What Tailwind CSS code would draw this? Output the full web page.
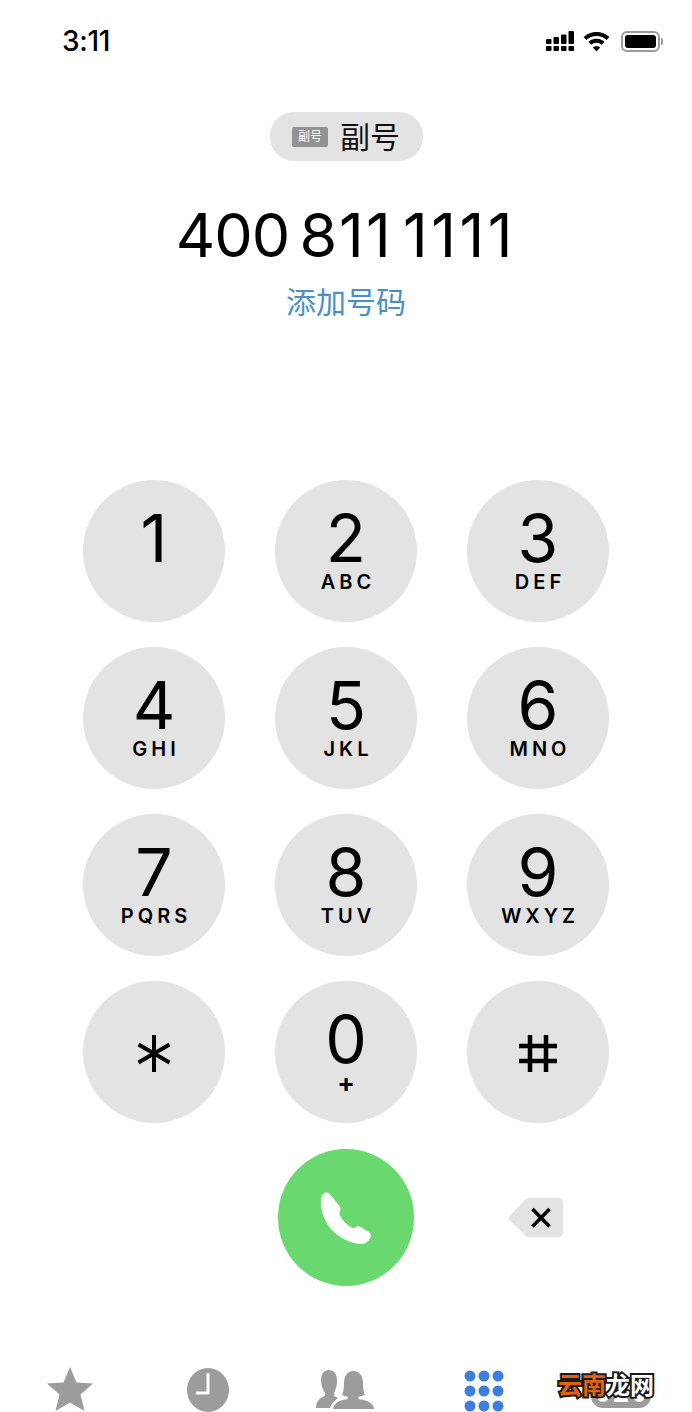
<!DOCTYPE html>
<html lang="zh-CN">
<head>
    <meta charset="UTF-8">
    <meta name="viewport" content="width=device-width, initial-scale=1.0">
    <script src="https://cdn.jsdelivr.net/npm/@tailwindcss/browser@4"></script>
    <title>Keypad</title>
</head>
<body class="bg-white">
<div class="relative w-[692px] h-[1412px] overflow-hidden bg-white text-black font-['Inter','Noto_Sans_CJK_SC',sans-serif]">

    <!-- Status bar -->
    <div class="flex items-center justify-between h-[82px] pl-[62px] pr-[29px]">
        <span class="text-[28px] font-medium leading-none tracking-[-0.3px]">3:11</span>
        <div class="flex items-center gap-[11px]">
            <div class="flex items-center gap-[8px]">
                <svg width="30" height="22" viewBox="0 0 30 22" fill="#000">
                    <rect x="1" y="9" width="5.500" height="5" rx="1"/><rect x="1" y="16" width="5.500" height="5" rx="1"/>
                    <rect x="8.500" y="7" width="5.500" height="7" rx="1"/><rect x="8.500" y="16" width="5.500" height="5" rx="1"/>
                    <rect x="16" y="4.500" width="5.500" height="9.500" rx="1"/><rect x="16" y="16" width="5.500" height="5" rx="1"/>
                    <rect x="23.500" y="1" width="5.500" height="13" rx="1"/><rect x="23.500" y="16" width="5.500" height="5" rx="1"/>
                </svg>
                <svg width="27" height="21" viewBox="0 0 27 21" fill="none" stroke="#000" stroke-width="4">
                    <path d="M2 7.500C8.500 1.500 18.500 1.500 25 7.500"/>
                    <path d="M6.800 12.300C10.500 8.800 16.500 8.800 20.200 12.300"/>
                    <path d="M13.500 20.500L9.800 16.500C11.800 14.800 15.200 14.800 17.200 16.500Z" fill="#000" stroke="none"/>
                </svg>
            </div>
            <div class="flex items-center">
                <div class="w-[39px] h-[21px] rounded-[6px] border-2 border-[#9a9a9a] p-[2px]">
                    <div class="w-full h-full rounded-[3px] bg-black"></div>
                </div>
                <div class="w-[2px] h-[7px] ml-[1px] rounded-r bg-[#9a9a9a]"></div>
            </div>
        </div>
    </div>

    <!-- SIM pill -->
    <div class="flex justify-center mt-[30px]">
        <div class="flex items-center justify-center gap-[12px] w-[153px] h-[49px] rounded-[24px] bg-[#e3e3e3]">
            <span class="flex items-center justify-center w-[36px] h-[20px] rounded-[2px] bg-[#929292] text-white text-[12px] leading-none">副号</span>
            <span class="text-[30px] leading-none text-[#111]">副号</span>
        </div>
    </div>

    <!-- Number -->
    <div class="text-center text-[61px] leading-none mt-[44px] tracking-[-1px] [word-spacing:-6px] font-normal">400 <span class="tracking-[2px]">811</span> <span class="tracking-[3.5px]">1111</span></div>
    <div class="text-center text-[30px] leading-none mt-[21px] text-[#4a90c8]">添加号码</div>

    <!-- Keypad -->
    <div class="grid grid-cols-[142px_142px_142px] gap-x-[50px] gap-y-[25px] ml-[83px] mt-[163px]">
        <div class="flex flex-col items-center w-[142px] h-[142px] rounded-full bg-[#e3e3e3]"><span class="text-[66px] leading-[50px] mt-[33px] font-normal">1</span></div>
        <div class="flex flex-col items-center w-[142px] h-[142px] rounded-full bg-[#e3e3e3]"><span class="text-[66px] leading-[50px] mt-[33px] font-normal">2</span><span class="text-[20px] leading-[20px] font-semibold tracking-[4px] mt-[9px] ml-[4px]">ABC</span></div>
        <div class="flex flex-col items-center w-[142px] h-[142px] rounded-full bg-[#e3e3e3]"><span class="text-[66px] leading-[50px] mt-[33px] font-normal">3</span><span class="text-[20px] leading-[20px] font-semibold tracking-[4px] mt-[9px] ml-[4px]">DEF</span></div>
        <div class="flex flex-col items-center w-[142px] h-[142px] rounded-full bg-[#e3e3e3]"><span class="text-[66px] leading-[50px] mt-[33px] font-normal">4</span><span class="text-[20px] leading-[20px] font-semibold tracking-[4px] mt-[9px] ml-[4px]">GHI</span></div>
        <div class="flex flex-col items-center w-[142px] h-[142px] rounded-full bg-[#e3e3e3]"><span class="text-[66px] leading-[50px] mt-[33px] font-normal">5</span><span class="text-[20px] leading-[20px] font-semibold tracking-[4px] mt-[9px] ml-[4px]">JKL</span></div>
        <div class="flex flex-col items-center w-[142px] h-[142px] rounded-full bg-[#e3e3e3]"><span class="text-[66px] leading-[50px] mt-[33px] font-normal">6</span><span class="text-[20px] leading-[20px] font-semibold tracking-[4px] mt-[9px] ml-[4px]">MNO</span></div>
        <div class="flex flex-col items-center w-[142px] h-[142px] rounded-full bg-[#e3e3e3]"><span class="text-[66px] leading-[50px] mt-[33px] font-normal">7</span><span class="text-[20px] leading-[20px] font-semibold tracking-[4px] mt-[9px] ml-[4px]">PQRS</span></div>
        <div class="flex flex-col items-center w-[142px] h-[142px] rounded-full bg-[#e3e3e3]"><span class="text-[66px] leading-[50px] mt-[33px] font-normal">8</span><span class="text-[20px] leading-[20px] font-semibold tracking-[4px] mt-[9px] ml-[4px]">TUV</span></div>
        <div class="flex flex-col items-center w-[142px] h-[142px] rounded-full bg-[#e3e3e3]"><span class="text-[66px] leading-[50px] mt-[33px] font-normal">9</span><span class="text-[20px] leading-[20px] font-semibold tracking-[4px] mt-[9px] ml-[4px]">WXYZ</span></div>
        <div class="flex items-center justify-center w-[142px] h-[142px] rounded-full bg-[#e3e3e3]">
            <svg class="mt-[3px]" width="34" height="37" viewBox="0 0 34 37" fill="none" stroke="#000" stroke-width="4"><path d="M17 0V37M1.500 9.500L32.500 27.500M32.500 9.500L1.500 27.500"/></svg>
        </div>
        <div class="flex flex-col items-center w-[142px] h-[142px] rounded-full bg-[#e3e3e3]"><span class="text-[66px] leading-[50px] mt-[33px] font-normal">0</span><span class="text-[26px] leading-[20px] font-bold mt-[9px]">+</span></div>
        <div class="flex items-center justify-center w-[142px] h-[142px] rounded-full bg-[#e3e3e3]">
            <svg class="mt-[3px]" width="38" height="37" viewBox="0 0 38 37" fill="none" stroke="#000" stroke-width="4.500"><path d="M11 0V37M27 0V37M0 11H38M0 26H38"/></svg>
        </div>
    </div>

    <!-- Call row -->
    <div class="flex items-center mt-[26px] ml-[278px]">
        <div class="flex items-center justify-center w-[136px] h-[137px] rounded-full bg-[#69d96f]">
            <svg width="54" height="54" viewBox="0 0 54 54" fill="#fff">
                <path d="M2 7C3 3 6 1 8 1.500C10 2 11 3 12 4.500L20.500 15C22 17 22 19 20.500 21L20.500 23.500C23 29 28 34 33.500 37L36.500 36.500C38 35 40 35 42 36L50 41C52 42.500 52.500 44.500 51.500 46.500C50 50 46 53 43 53C33 53 20 47 12 38C5 30 1 18 2 7Z"/>
            </svg>
        </div>
        <svg class="ml-[94px]" width="56" height="42" viewBox="0 0 56 42">
            <path d="M21 1H50C53 1 55 3 55 6V35C55 38 53 40 50 40H21C19.500 40 18.500 39.500 17.500 38.500L1.500 23C.500 21.800 .500 20.200 1.500 19L17.500 2.500C18.500 1.500 19.500 1 21 1Z" fill="#e3e3e3"/>
            <path d="M24.500 12L41.500 29.500M41.500 12L24.500 29.500" stroke="#000" stroke-width="3.600" fill="none"/>
        </svg>
    </div>

    <!-- Tab bar, clipped by the bottom edge of the shot -->
    <div class="absolute left-0 top-[1364px] w-full h-[48px]">
        <svg class="absolute left-[46px] top-[2px]" width="48" height="46" viewBox="0 0 48 46" fill="#9c9c9c">
            <path d="M24 1L30.500 16.500L47 17.500L34.500 28.500L38.500 45L24 36.500L9.500 45L13.500 28.500L1 17.500L17.500 16.500Z"/>
        </svg>
        <svg class="absolute left-[186px] top-[4px]" width="44" height="44" viewBox="0 0 44 44">
            <ellipse cx="22" cy="22" rx="21" ry="22" fill="#9c9c9c"/>
            <path d="M22 5V25H10" fill="none" stroke="#fff" stroke-width="3"/>
        </svg>
        <svg class="absolute left-[316px] top-[6px]" width="58" height="40" viewBox="0 0 58 40" fill="#9c9c9c">
            <path d="M13 0C19 0 21 5 21 11C21 17 19 21 18 23V26L22 28C19 30 16 33 14 38H0C0 31 4 28 9 26V23C7 20 5 16 5 10C5 4 8 0 13 0Z"/>
            <path d="M37 1C44 1 47 7 47 13C47 19 48 23 49 25L42 27V29C49 30 58 32 58 39H17C18 32 25 30 32 29V27L26 25C27 23 28 19 28 13C28 7 31 1 37 1Z"/>
        </svg>
        <svg class="absolute left-[462px] top-[5px]" width="44" height="43" viewBox="0 0 44 43" fill="#3f7fdc">
            <circle cx="8" cy="7" r="5.500"/><circle cx="22" cy="7" r="5.500"/><circle cx="36" cy="7" r="5.500"/>
            <circle cx="8" cy="22" r="5.500"/><circle cx="22" cy="22" r="5.500"/><circle cx="36" cy="22" r="5.500"/>
            <circle cx="8" cy="37" r="5.500"/><circle cx="22" cy="37" r="5.500"/><circle cx="36" cy="37" r="5.500"/>
        </svg>
        <svg class="absolute left-[590px] top-[28px]" width="64" height="20" viewBox="0 0 64 20" fill="none" stroke="#9c9c9c" stroke-width="6">
            <circle cx="13" cy="4" r="9"/><circle cx="49" cy="4" r="9"/><path d="M13 13H49"/>
        </svg>
    </div>

    <!-- Watermark -->
    <div class="absolute left-[558px] top-[1371px] flex text-[24px] leading-[30px] font-bold [paint-order:stroke_fill] [-webkit-text-stroke:4px_#1a1a1a]">
        <span class="text-[#e0640f]">云南</span><span class="text-white">龙网</span>
    </div>
</div>
</body>
</html>
